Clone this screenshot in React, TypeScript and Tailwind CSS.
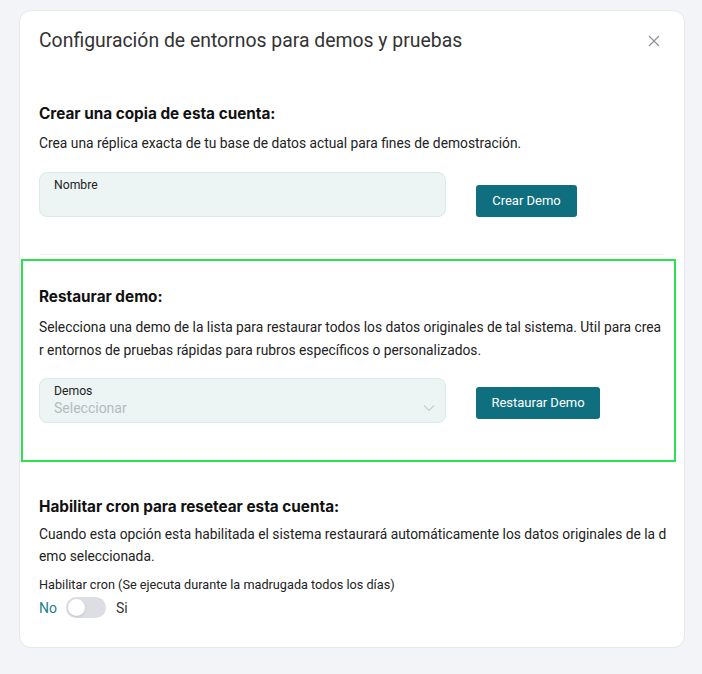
import React from "react";

const body = { fontFamily: "Roboto, 'Liberation Sans', sans-serif" };
const head = { fontFamily: "Inter, 'Noto Sans', sans-serif" };

export default function App() {
  return (
    <div className="min-h-[674px] w-[702px] bg-[#f3f4f8] pt-[10px] pl-[19px]" style={body}>
      <div className="w-[666px] h-[638px] bg-white rounded-[12px] border border-[#e6e8ee]">
        <div className="flex items-center justify-between pl-[19px] pr-[20px] pt-[16px]">
          <h1 className="text-[19.4px] leading-[28px] text-[#333]">Configuración de entornos para demos y pruebas</h1>
          <svg width="12" height="12" viewBox="0 0 12 12" className="mr-[4px]">
            <path d="M1 1L11 11M11 1L1 11" stroke="#8a8f99" strokeWidth="1.1" />
          </svg>
        </div>

        <div className="pl-[19px] pr-[18px] pt-[49px]">
          <h2 className="text-[15.3px] leading-[20px] font-bold text-[#111]" style={head}>Crear una copia de esta cuenta:</h2>
          <p className="mt-[8px] text-[13.8px] leading-[23px] text-[#222]">Crea una réplica exacta de tu base de datos actual para fines de demostración.</p>
          <div className="mt-[17px] flex items-start">
            <div className="w-[407px] h-[45px] rounded-[8px] bg-[#edf4f4] border border-[#d9e9e9] px-[14px] pt-[4px]">
              <div className="text-[12.2px] leading-[16px] text-[#222]">Nombre</div>
            </div>
            <button className="ml-[30px] mt-[13px] h-[32px] w-[101px] rounded-[3px] bg-[#0f6f7f] text-white text-[13px]">Crear Demo</button>
          </div>
        </div>

        <div className="mt-[37px] mx-[20px] border-t border-[#eff0f3]" />

        <div className="ml-[1px] mt-[4px] w-[655px] border-2 border-[#2ee04f] pl-[16px] pr-[11px] pt-[26px] pb-[37px]">
          <h2 className="text-[15.3px] leading-[20px] font-bold text-[#111]" style={head}>Restaurar demo:</h2>
          <p className="mt-[9px] text-[13.8px] leading-[23px] text-[#222] break-all">Selecciona una demo de la lista para restaurar todos los datos originales de tal sistema. Util para crear entornos de pruebas rápidas para rubros específicos o personalizados.</p>
          <div className="mt-[16px] flex items-start">
            <div className="relative w-[407px] h-[45px] rounded-[8px] bg-[#edf4f4] border border-[#d9e9e9] px-[14px] pt-[4px]">
              <div className="text-[12.2px] leading-[16px] text-[#222]">Demos</div>
              <div className="text-[14px] leading-[18px] text-[#b3bcbe]">Seleccionar</div>
              <svg width="12" height="8" viewBox="0 0 12 8" className="absolute right-[10px] top-[25px]">
                <path d="M1 1.5L6 6.5L11 1.5" fill="none" stroke="#c5cdd0" strokeWidth="1.1" />
              </svg>
            </div>
            <button className="ml-[30px] mt-[9px] h-[32px] w-[124px] rounded-[3px] bg-[#0f6f7f] text-white text-[13px]">Restaurar Demo</button>
          </div>
        </div>

        <div className="pl-[19px] pr-[14px] pt-[35px]">
          <h2 className="text-[15.3px] leading-[20px] font-bold text-[#111]" style={head}>Habilitar cron para resetear esta cuenta:</h2>
          <p className="mt-[6px] text-[13.8px] leading-[22px] text-[#222] break-all">Cuando esta opción esta habilitada el sistema restaurará automáticamente los datos originales de la demo seleccionada.</p>
          <div className="mt-[10px] text-[12.7px] leading-[16px] text-[#222]">Habilitar cron (Se ejecuta durante la madrugada todos los días)</div>
          <div className="mt-[4px] flex items-center text-[14px] leading-[20px]">
            <span className="text-[#1a7f8e]">No</span>
            <div className="ml-[9px] w-[40px] h-[21px] rounded-full bg-[#dcdee3] p-[2px]">
              <div className="w-[17px] h-[17px] rounded-full bg-white shadow-sm" />
            </div>
            <span className="ml-[10px] text-[#333]">Si</span>
          </div>
        </div>
      </div>
    </div>
  );
}
